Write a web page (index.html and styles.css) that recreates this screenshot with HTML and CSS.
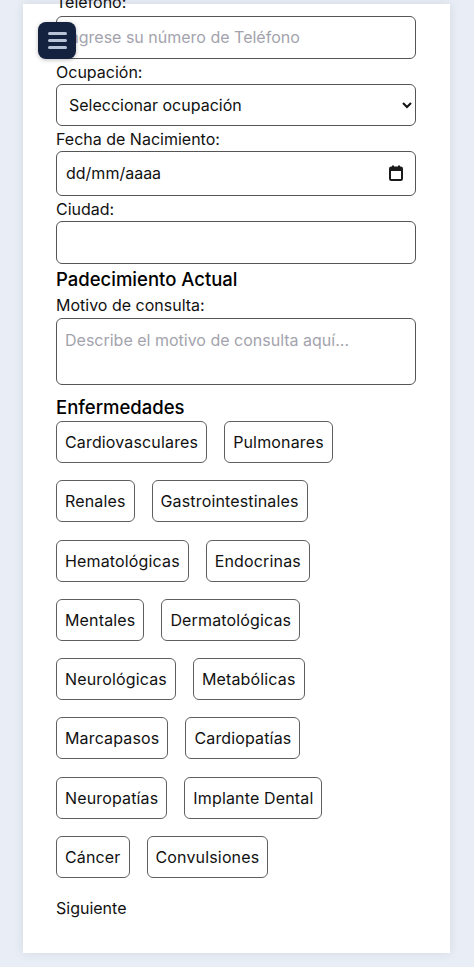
FILE: index.html
```html
<!DOCTYPE html>
<html lang="es">
<head>
<meta charset="utf-8">
<title>Formulario</title>
<link rel="stylesheet" href="styles.css">
</head>
<body>
<button class="menu-btn" type="button" aria-label="Menú">
  <span class="menu-line"></span>
  <span class="menu-line"></span>
  <span class="menu-line"></span>
</button>
<main class="page">
  <form class="card">
    <label class="label label-first" for="tel">Teléfono:</label>
    <input class="field" id="tel" type="text" placeholder="Ingrese su número de Teléfono">

    <label class="label" for="ocu">Ocupación:</label>
    <select class="field select" id="ocu">
      <option>Seleccionar ocupación</option>
    </select>

    <label class="label" for="fecha">Fecha de Nacimiento:</label>
    <div class="field date-field">
      <input class="date-input" id="fecha" type="text" placeholder="dd/mm/aaaa">
      <svg class="cal-icon" width="14" height="16" viewBox="0 0 14 16" aria-hidden="true">
        <rect x="3" y="0.5" width="2" height="2.5" fill="#1a1a1a"/>
        <rect x="9" y="0.5" width="2" height="2.5" fill="#1a1a1a"/>
        <rect x="1" y="2.5" width="12" height="12.5" rx="1.2" fill="none" stroke="#1a1a1a" stroke-width="2"/>
        <rect x="1" y="2.5" width="12" height="3.5" fill="#1a1a1a"/>
      </svg>
    </div>

    <label class="label" for="ciudad">Ciudad:</label>
    <input class="field" id="ciudad" type="text">

    <h2 class="section-title">Padecimiento Actual</h2>
    <label class="label label-tight" for="motivo">Motivo de consulta:</label>
    <textarea class="field textarea" id="motivo" placeholder="Describe el motivo de consulta aquí..."></textarea>

    <h2 class="section-title section-title-2">Enfermedades</h2>
    <div class="chips">
      <button type="button" class="chip">Cardiovasculares</button>
      <button type="button" class="chip">Pulmonares</button>
      <button type="button" class="chip">Renales</button>
      <button type="button" class="chip">Gastrointestinales</button>
      <button type="button" class="chip">Hematológicas</button>
      <button type="button" class="chip">Endocrinas</button>
      <button type="button" class="chip">Mentales</button>
      <button type="button" class="chip">Dermatológicas</button>
      <button type="button" class="chip">Neurológicas</button>
      <button type="button" class="chip">Metabólicas</button>
      <button type="button" class="chip">Marcapasos</button>
      <button type="button" class="chip">Cardiopatías</button>
      <button type="button" class="chip">Neuropatías</button>
      <button type="button" class="chip">Implante Dental</button>
      <button type="button" class="chip">Cáncer</button>
      <button type="button" class="chip">Convulsiones</button>
    </div>

    <button type="button" class="next-btn">Siguiente</button>
  </form>
</main>
</body>
</html>
```

FILE: styles.css
```css
* {
  box-sizing: border-box;
}

html, body {
  margin: 0;
  padding: 0;
}

body {
  background: #e9edf5;
  font-family: Inter, "Noto Sans", "Liberation Sans", sans-serif;
  color: #111;
  font-size: 16px;
  overflow: hidden;
  height: 967px;
}

.page {
  padding: 4px 24px 14px 23px;
}

.card {
  background: #fff;
  box-shadow: 0 0 10px rgba(40, 50, 80, 0.10);
  padding: 0 34px 35px 33px;
  display: flex;
  flex-direction: column;
  height: 949px;
}

.label {
  display: block;
  font-size: 16px;
  line-height: 20px;
  margin: 3px 0 2px;
  color: #111;
}

.label-first {
  margin-top: -12px;
  margin-bottom: 4px;
}

.label-tight {
  margin-top: 5px;
  margin-bottom: 3px;
}

.field {
  display: block;
  width: 100%;
  height: 43px;
  border: 1px solid #555;
  border-radius: 6px;
  background: #fff;
  font-family: inherit;
  font-size: 16px;
  color: #111;
  padding: 0 8px;
  outline: none;
}

.field::placeholder,
.textarea::placeholder {
  color: #a3a3ad;
}

.select {
  height: 42px;
  padding: 0 8px;
  color: #111;
}

.date-field {
  height: 45px;
  display: flex;
  align-items: center;
  padding: 0 12px 0 9px;
}

.date-input {
  flex: 1;
  border: none;
  outline: none;
  font-family: inherit;
  font-size: 16px;
  padding: 0;
  background: transparent;
  min-width: 0;
}

.date-input::placeholder {
  color: #111;
}

.cal-icon {
  flex: none;
  display: block;
}

.section-title {
  font-size: 18.5px;
  line-height: 22px;
  font-weight: 500;
  margin: 4px 0 0;
  color: #000;
}

.section-title-2 {
  margin-top: 11px;
  margin-bottom: 3px;
}

.textarea {
  height: 67px;
  padding: 11px 8px;
  resize: none;
  line-height: normal;
}

.chips {
  display: flex;
  flex-wrap: wrap;
  row-gap: 17.3px;
}

.chip {
  height: 42px;
  padding: 0 8px;
  margin-right: 17px;
  border: 1px solid #5f5f5f;
  border-radius: 6px;
  background: #fff;
  font-family: inherit;
  font-size: 16px;
  letter-spacing: 0.15px;
  color: #111;
  cursor: pointer;
}

.next-btn {
  align-self: flex-start;
  margin-top: 20px;
  border: none;
  background: none;
  padding: 0;
  font-family: inherit;
  font-size: 16px;
  line-height: 20px;
  color: #111;
  cursor: pointer;
}

.menu-btn {
  position: fixed;
  left: 38px;
  top: 22px;
  width: 38px;
  height: 37px;
  border: none;
  border-radius: 8px;
  background: #15223f;
  box-shadow: 0 1px 4px rgba(0, 0, 0, 0.25);
  display: flex;
  flex-direction: column;
  align-items: center;
  justify-content: center;
  gap: 4.5px;
  padding: 0;
  cursor: pointer;
}

.menu-line {
  display: block;
  width: 19px;
  height: 2.5px;
  border-radius: 2px;
  background: #b9c3d8;
}
```
